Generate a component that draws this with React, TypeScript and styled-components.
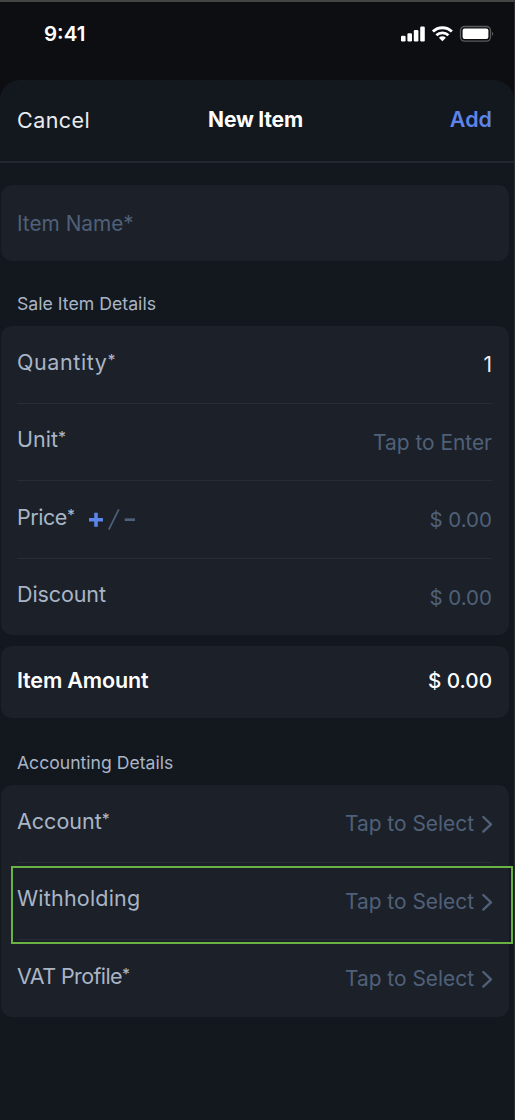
import React from "react";
import styled, { createGlobalStyle } from "styled-components";

const GlobalStyle = createGlobalStyle`
  * { box-sizing: border-box; }
  body {
    margin: 0;
    background: #0d0e11;
    font-family: Inter, "Liberation Sans", sans-serif;
  }
`;

const Screen = styled.div`
  display: flex;
  flex-direction: column;
  width: 515px;
  height: 1120px;
  overflow: hidden;
  background: #0d0e11;
  border-top: 2px solid #454546;
  border-right: 1px solid #2b2d30;
`;

const StatusBar = styled.div`
  display: flex;
  justify-content: space-between;
  height: 77.5px;
  flex: none;
  padding: 23px 20px 0 44px;
`;

const Clock = styled.div`
  font-size: 20.5px;
  line-height: 18px;
  font-weight: 600;
  color: #fff;
`;

const StatusIcons = styled.svg`
  display: block;
  width: 94px;
  height: 18px;
`;

const Sheet = styled.main`
  flex: 1;
  background: #13171e;
  border-radius: 20px 20px 0 0;
`;

const Header = styled.header`
  display: grid;
  grid-template-columns: 1fr auto 1fr;
  align-items: center;
  height: 83.5px;
  padding: 0 22px 2px 17px;
  border-bottom: 2px solid #23272f;
`;

const HeaderLeft = styled.div`
  padding-top: 2px;
`;

const HeaderTitle = styled.div`
  padding: 2px 0 0 2px;
`;

const HeaderRight = styled.div`
  text-align: right;
`;

type TextProps = { $size?: number; $weight?: number; $color?: string; $track?: number };

const Text = styled.span<TextProps>`
  font-size: ${(p) => p.$size ?? 21.5}px;
  font-weight: ${(p) => p.$weight ?? 400};
  color: ${(p) => p.$color ?? "#a9b5c6"};
  letter-spacing: ${(p) => p.$track ?? 0}px;
  line-height: 28px;
  white-space: nowrap;
`;

const Asterisk = styled.span`
  font-size: 15.5px;
  font-weight: 500;
  line-height: 1;
  letter-spacing: 0;
  vertical-align: 4px;
`;

const Content = styled.div`
  padding: 22px 5px 0 0.7px;
`;

const Card = styled.section`
  padding: 0 17px 0 16.3px;
  border-radius: 11px;
  background: #1b2029;
`;

const NameField = styled(Card)`
  display: flex;
  align-items: center;
  height: 76px;
  padding-top: 2px;
`;

const AmountCard = styled(Card)`
  display: flex;
  justify-content: space-between;
  height: 72px;
  margin-top: 11px;
  padding-top: 20px;
`;

const AmountValue = styled.div`
  padding-top: 1px;
`;

const SectionTitle = styled.h2<{ $height: number }>`
  height: ${(p) => p.$height}px;
  margin: 0;
  padding: ${(p) => p.$height - 38}px 0 0 16.3px;
  line-height: 28px;
`;

const Row = styled.div`
  position: relative;
  display: flex;
  justify-content: space-between;
  height: 77.6px;
  padding-top: 21.7px;
  border-bottom: 1.5px solid #272c38;

  &:last-child {
    height: 76.4px;
    border-bottom: 0;
  }
`;

const Value = styled.div`
  display: flex;
  align-items: center;
  height: 28px;
  margin-top: 3.3px;
`;

const LabelGroup = styled.div`
  display: flex;
  height: 28px;
`;

const SignToggle = styled.svg`
  width: 48px;
  height: 24px;
  margin: 3.8px 0 0 12.7px;
`;

const Chevron = styled.svg`
  width: 12px;
  height: 20px;
  margin: 0 -1px 0 7px;
`;

const Outline = styled.div`
  position: absolute;
  left: -5.5px;
  right: -20.5px;
  top: 3.4px;
  height: 78px;
  border: 2px solid #69b344;
`;

const muted = "#506078";

function StatusGlyphs() {
  return (
    <StatusIcons viewBox="0 0 94 18">
      <g fill="#fff">
        <rect x="1" y="10.8" width="4.6" height="5.6" rx="1.2" />
        <rect x="7.4" y="8.3" width="4.6" height="8.1" rx="1.2" />
        <rect x="13.8" y="5" width="4.6" height="11.4" rx="1.2" />
        <rect x="20.2" y="1.5" width="4.6" height="14.9" rx="1.2" />
        <path d="M42.4 16.2L38.9 12.7Q42.4 9.9 45.9 12.7Z" />
      </g>
      <g fill="none" stroke="#fff" strokeWidth="2.8">
        <path d="M32.9 6.6A13.6 13.6 0 0 1 51.9 6.6" />
        <path d="M36.4 10.3A8.6 8.6 0 0 1 48.4 10.3" />
      </g>
      <rect x="60.5" y="1.5" width="30" height="14.6" rx="4" fill="none" stroke="#595a5c" strokeWidth="1.3" />
      <rect x="62.6" y="3.6" width="25.8" height="10.4" rx="2" fill="#fff" />
      <path d="M92 6.5 Q94.5 8.8 92 11 Z" fill="#595a5c" />
    </StatusIcons>
  );
}

function PlusMinus() {
  return (
    <SignToggle viewBox="0 0 48 24" fill="none">
      <path d="M1 12.7H15M8 5.7V19.7" stroke="#5d84e8" strokeWidth="3.6" />
      <path d="M20.8 22.7L30.8 2.3" stroke={muted} strokeWidth="1.7" />
      <path d="M36.7 12.7H47" stroke={muted} strokeWidth="2.7" />
    </SignToggle>
  );
}

type FieldProps = {
  label: string;
  value: string;
  required?: boolean;
  track?: number;
  valueSize?: number;
  valueColor?: string;
  select?: boolean;
  highlighted?: boolean;
  extra?: React.ReactNode;
};

function Field({
  label,
  value,
  required,
  track,
  valueSize = 20.9,
  valueColor = muted,
  select,
  highlighted,
  extra,
}: FieldProps) {
  return (
    <Row>
      <LabelGroup>
        <Text $track={track}>
          {label}
          {required && <Asterisk>*</Asterisk>}
        </Text>
        {extra}
      </LabelGroup>
      <Value>
        <Text $color={valueColor} $size={valueSize}>{value}</Text>
        {select && (
          <Chevron viewBox="0 0 12 20" fill="none">
            <path d="M2.3 3L10 10.3L2.3 17.6" stroke={muted} strokeWidth="2.4" strokeLinecap="round" strokeLinejoin="round" />
          </Chevron>
        )}
      </Value>
      {highlighted && <Outline />}
    </Row>
  );
}

export default function App() {
  return (
    <>
      <GlobalStyle />
      <Screen>
        <StatusBar>
          <Clock>9:41</Clock>
          <StatusGlyphs />
        </StatusBar>
        <Sheet>
          <Header>
            <HeaderLeft>
              <Text $color="#e9ebef" $track={0.45}>Cancel</Text>
            </HeaderLeft>
            <HeaderTitle>
              <Text $color="#fff" $size={21} $weight={700} $track={-0.2}>New Item</Text>
            </HeaderTitle>
            <HeaderRight>
              <Text $color="#5d84e8" $weight={600}>Add</Text>
            </HeaderRight>
          </Header>
          <Content>
            <NameField>
              <Text $color={muted} $size={20.8}>Item Name*</Text>
            </NameField>
            <SectionTitle $height={65}>
              <Text $size={17.7}>Sale Item Details</Text>
            </SectionTitle>
            <Card>
              <Field label="Quantity" required track={0.6} value="1" valueColor="#e9ebef" />
              <Field label="Unit" required value="Tap to Enter" />
              <Field label="Price" required track={-0.45} value="$ 0.00" valueSize={20.5} extra={<PlusMinus />} />
              <Field label="Discount" track={-0.1} value="$ 0.00" valueSize={20.5} />
            </Card>
            <AmountCard>
              <Text $color="#fff" $weight={600} $track={-0.15}>Item Amount</Text>
              <AmountValue>
                <Text $color="#fff" $size={20.7} $weight={500}>$ 0.00</Text>
              </AmountValue>
            </AmountCard>
            <SectionTitle $height={67}>
              <Text $size={17.6}>Accounting Details</Text>
            </SectionTitle>
            <Card>
              <Field label="Account" required value="Tap to Select" select />
              <Field label="Withholding" track={0.2} value="Tap to Select" select highlighted />
              <Field label="VAT Profile" required track={-0.6} value="Tap to Select" select />
            </Card>
          </Content>
        </Sheet>
      </Screen>
    </>
  );
}
